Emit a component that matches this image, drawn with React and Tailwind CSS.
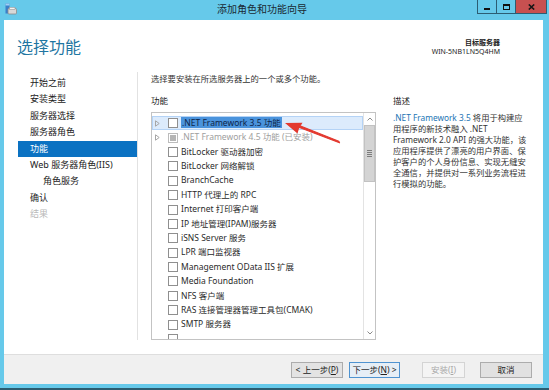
const items = [
  { t: '.NET Framework 3.5 功能', exp: true, sel: true },
  { t: '.NET Framework 4.5 功能 (已安装)', exp: true, dis: true },
  { t: 'BitLocker 驱动器加密' },
  { t: 'BitLocker 网络解锁' },
  { t: 'BranchCache' },
  { t: 'HTTP 代理上的 RPC' },
  { t: 'Internet 打印客户端' },
  { t: 'IP 地址管理(IPAM)服务器' },
  { t: 'iSNS Server 服务' },
  { t: 'LPR 端口监视器' },
  { t: 'Management OData IIS 扩展' },
  { t: 'Media Foundation' },
  { t: 'NFS 客户端' },
  { t: 'RAS 连接管理器管理工具包(CMAK)' },
  { t: 'SMTP 服务器' },
  { t: '', partial: true },
];

const nav = [
  { t: '开始之前' },
  { t: '安装类型' },
  { t: '服务器选择' },
  { t: '服务器角色' },
  { t: '功能', sel: true },
  { t: 'Web 服务器角色(IIS)' },
  { t: '角色服务', sub: true },
  { t: '确认' },
  { t: '结果', dis: true },
];

const desc = [
  '将用于构建应',
  '用程序的新技术融入 .NET',
  'Framework 2.0 API 的强大功能，该',
  '应用程序提供了漂亮的用户界面、保',
  '护客户的个人身份信息、实现无缝安',
  '全通信，并提供对一系列业务流程进',
  '行模拟的功能。',
];

function Expander() {
  return (
    <svg width="5" height="7" viewBox="0 0 5 7" className="block">
      <path d="M0.5 0.8 L4.2 3.5 L0.5 6.2 Z" fill="none" stroke="#a6a6a6" strokeWidth="1" />
    </svg>
  );
}

function Row({ it }) {
  return (
    <div
      className={
        'relative flex h-[14.4px] items-center ' +
        (it.sel ? 'bg-[#dcebfc] outline outline-1 outline-[#b4d3f6] -outline-offset-1' : '')
      }
    >
      <div className="flex w-[16px] shrink-0 items-center pl-[3px]">{it.exp ? <Expander /> : null}</div>
      <div
        className={
          'flex h-[10px] w-[10px] shrink-0 items-center justify-center border bg-white ' +
          (it.dis ? 'border-[#bcbcbc]' : 'border-[#8f8f8f]')
        }
      >
        {it.dis ? <div className="h-[6px] w-[6px] bg-[#b5b5b5]" /> : null}
      </div>
      {it.partial ? null : (
        <div className="ml-[3px] whitespace-nowrap">
          {it.sel ? (
            <span className="bg-[#4a93dc] px-[1px] text-[#0d2448]">{it.t}</span>
          ) : (
            <span className={it.dis ? 'text-[#9e9e9e]' : 'text-[#2a2a2a]'}>{it.t}</span>
          )}
        </div>
      )}
    </div>
  );
}

function Btn({ children, className = '' }) {
  return (
    <div
      className={
        'flex h-[16px] items-center justify-center border text-[8.5px] leading-none ' + className
      }
    >
      {children}
    </div>
  );
}

export default function App() {
  return (
    <div className="relative flex h-[390px] w-[549px] flex-col overflow-hidden bg-[#66c9ea] font-['Noto_Sans','Noto_Sans_CJK_SC',sans-serif] text-[#222]">
      {/* title bar */}
      <div className="flex h-[20px] shrink-0 items-start">
        <div className="w-[22px] shrink-0 pl-[5px] pt-[3px]">
          <svg width="12" height="12" viewBox="0 0 12 12" className="block">
            <rect x="0.5" y="0.5" width="4" height="10" fill="#3b7fc8" />
            <rect x="0.5" y="0.5" width="4" height="2" fill="#9fd0f5" />
            <rect x="3" y="5.5" width="8.5" height="5.5" rx="1" fill="#d8d8d8" stroke="#8b8b8b" strokeWidth="0.8" />
            <rect x="4.5" y="4.3" width="5.5" height="2" fill="#f2f2f2" stroke="#9a9a9a" strokeWidth="0.6" />
          </svg>
        </div>
        <div className="flex-1 pl-[25px] text-center text-[10px] leading-[19px] text-[#1a2a33]">
          添加角色和功能向导
        </div>
        <div className="mr-[2px] flex h-[14px] border-b border-l border-[#2c5d73]">
          <div className="flex w-[19px] items-end justify-center border-r border-[#2c5d73] pb-[3px]">
            <div className="h-[2px] w-[6px] bg-[#111]" />
          </div>
          <div className="flex w-[19px] items-center justify-center border-r border-[#2c5d73]">
            <div className="h-[6px] w-[7px] border border-t-2 border-[#111]" />
          </div>
          <div className="flex w-[31px] items-center justify-center border-r border-[#2c5d73] bg-[#c75050]">
            <svg width="7" height="6" viewBox="0 0 7 6" className="block">
              <path d="M0.8 0.5 L6.2 5.5 M6.2 0.5 L0.8 5.5" stroke="#151515" strokeWidth="1.6" />
            </svg>
          </div>
        </div>
      </div>

      {/* white area */}
      <div className="ml-[4px] mr-[6px] flex flex-1 flex-col bg-white">
        {/* header */}
        <div className="flex h-[52px] shrink-0 items-center justify-between pl-[13px] pr-[43px] pt-[1px]">
          <div className="text-[16px] leading-none text-[#1f76a2]">选择功能</div>
          <div className="text-right leading-[9px] text-[#222]">
            <div className="text-[7px] font-bold">目标服务器</div>
            <div className="text-[7px]">WIN-5NB1LN5Q4HM</div>
          </div>
        </div>

        {/* body */}
        <div className="flex flex-1 items-start">
          <div className="h-[268px] w-[134px] shrink-0 border-r border-[#e2e2e2] pt-[3px]">
            {nav.map((n) => (
              <div
                key={n.t}
                className={
                  'ml-[14px] h-[16.4px] whitespace-nowrap text-[9px] leading-[16.4px] ' +
                  (n.sub ? 'pl-[25px] ' : 'pl-[12px] ') +
                  (n.sel ? 'bg-[#0b72c2] text-white ' : n.dis ? 'text-[#b9b9b9] ' : 'text-[#222] ')
                }
              >
                {n.t}
              </div>
            ))}
          </div>

          <div className="flex flex-col pl-[13px] pt-[1px]">
            <div className="h-[11px] text-[8.3px] leading-[11px] text-[#333]">
              选择要安装在所选服务器上的一个或多个功能。
            </div>
            <div className="mt-[11px] flex">
              <div className="flex flex-col">
                <div className="h-[11px] text-[8.5px] leading-[11px] text-[#222]">功能</div>
                <div className="mt-[6px] flex h-[228px] w-[225px] border border-[#c3c3c3] bg-white text-[8.5px]">
                  <div className="flex-1 overflow-hidden pt-[3px]">
                    {items.map((it, i) => (
                      <Row key={i} it={it} />
                    ))}
                  </div>
                  <div className="flex w-[12px] shrink-0 flex-col border-l border-[#e3e3e3]">
                    <div className="flex h-[12px] items-center justify-center">
                      <svg width="6" height="4" viewBox="0 0 6 4" className="block">
                        <path d="M0.5 3.5 L3 1 L5.5 3.5" fill="none" stroke="#8a8a8a" strokeWidth="1" />
                      </svg>
                    </div>
                    <div className="flex h-[57px] flex-col items-center justify-center gap-[1px] border border-[#c2c2c2] bg-[#d4d4d4]">
                      <div className="h-[1px] w-[5px] bg-[#7d7d7d]" />
                      <div className="h-[1px] w-[5px] bg-[#7d7d7d]" />
                      <div className="h-[1px] w-[5px] bg-[#7d7d7d]" />
                      <div className="h-[1px] w-[5px] bg-[#7d7d7d]" />
                    </div>
                    <div className="flex-1" />
                    <div className="flex h-[12px] items-center justify-center">
                      <svg width="6" height="4" viewBox="0 0 6 4" className="block">
                        <path d="M0.5 0.5 L3 3 L5.5 0.5" fill="none" stroke="#8a8a8a" strokeWidth="1" />
                      </svg>
                    </div>
                  </div>
                </div>
              </div>
              <div className="ml-[17px] flex w-[145px] flex-col">
                <div className="h-[11px] text-[8.5px] leading-[11px] text-[#222]">描述</div>
                <div className="mt-[5.5px] whitespace-nowrap text-[8.3px] leading-[11px] text-[#333]">
                  {desc.map((l, i) => (
                    <div key={i}>
                      {i === 0 ? <span className="text-[#1c74b4]">.NET Framework 3.5 </span> : null}
                      {l}
                    </div>
                  ))}
                </div>
              </div>
            </div>
          </div>
        </div>

        {/* footer */}
        <div className="flex h-[30px] shrink-0 items-start justify-end border-t border-[#dedede] bg-[#f0f0f0] pr-[11px] pt-[7px]">
          <Btn className="w-[52px] border-[#acacac] bg-[#e3e3e3] text-[#222]">
            &lt; 上一步(<u>P</u>)
          </Btn>
          <Btn className="ml-[6px] w-[51px] border-[#4f93d0] bg-[#e6eef6] text-[#222]">
            下一步(<u>N</u>) &gt;
          </Btn>
          <Btn className="ml-[22px] w-[43px] border-[#d4d4d4] bg-[#f4f4f4] text-[#a8a8a8]">
            安装(<u>I</u>)
          </Btn>
          <Btn className="ml-[15px] w-[52px] border-[#acacac] bg-[#e1e1e1] text-[#222]">
            取消
          </Btn>
        </div>
      </div>

      <div className="h-[4px] shrink-0" />
      <div className="h-[2px] shrink-0 bg-[#2b5c70]" />

      {/* red annotation arrow */}
      <svg className="pointer-events-none absolute left-0 top-0" width="549" height="390" viewBox="0 0 549 390">
        <path d="M299.5 127.5 L339.5 142.8 L338.8 141.2 L300.5 126 Z" fill="#e3392f" stroke="#e3392f" strokeWidth="1.2" strokeLinejoin="round" />
        <path d="M285 123 L302.5 122.8 L299 128.5 L297.5 133.5 Z" fill="#e3392f" />
      </svg>
    </div>
  );
}
